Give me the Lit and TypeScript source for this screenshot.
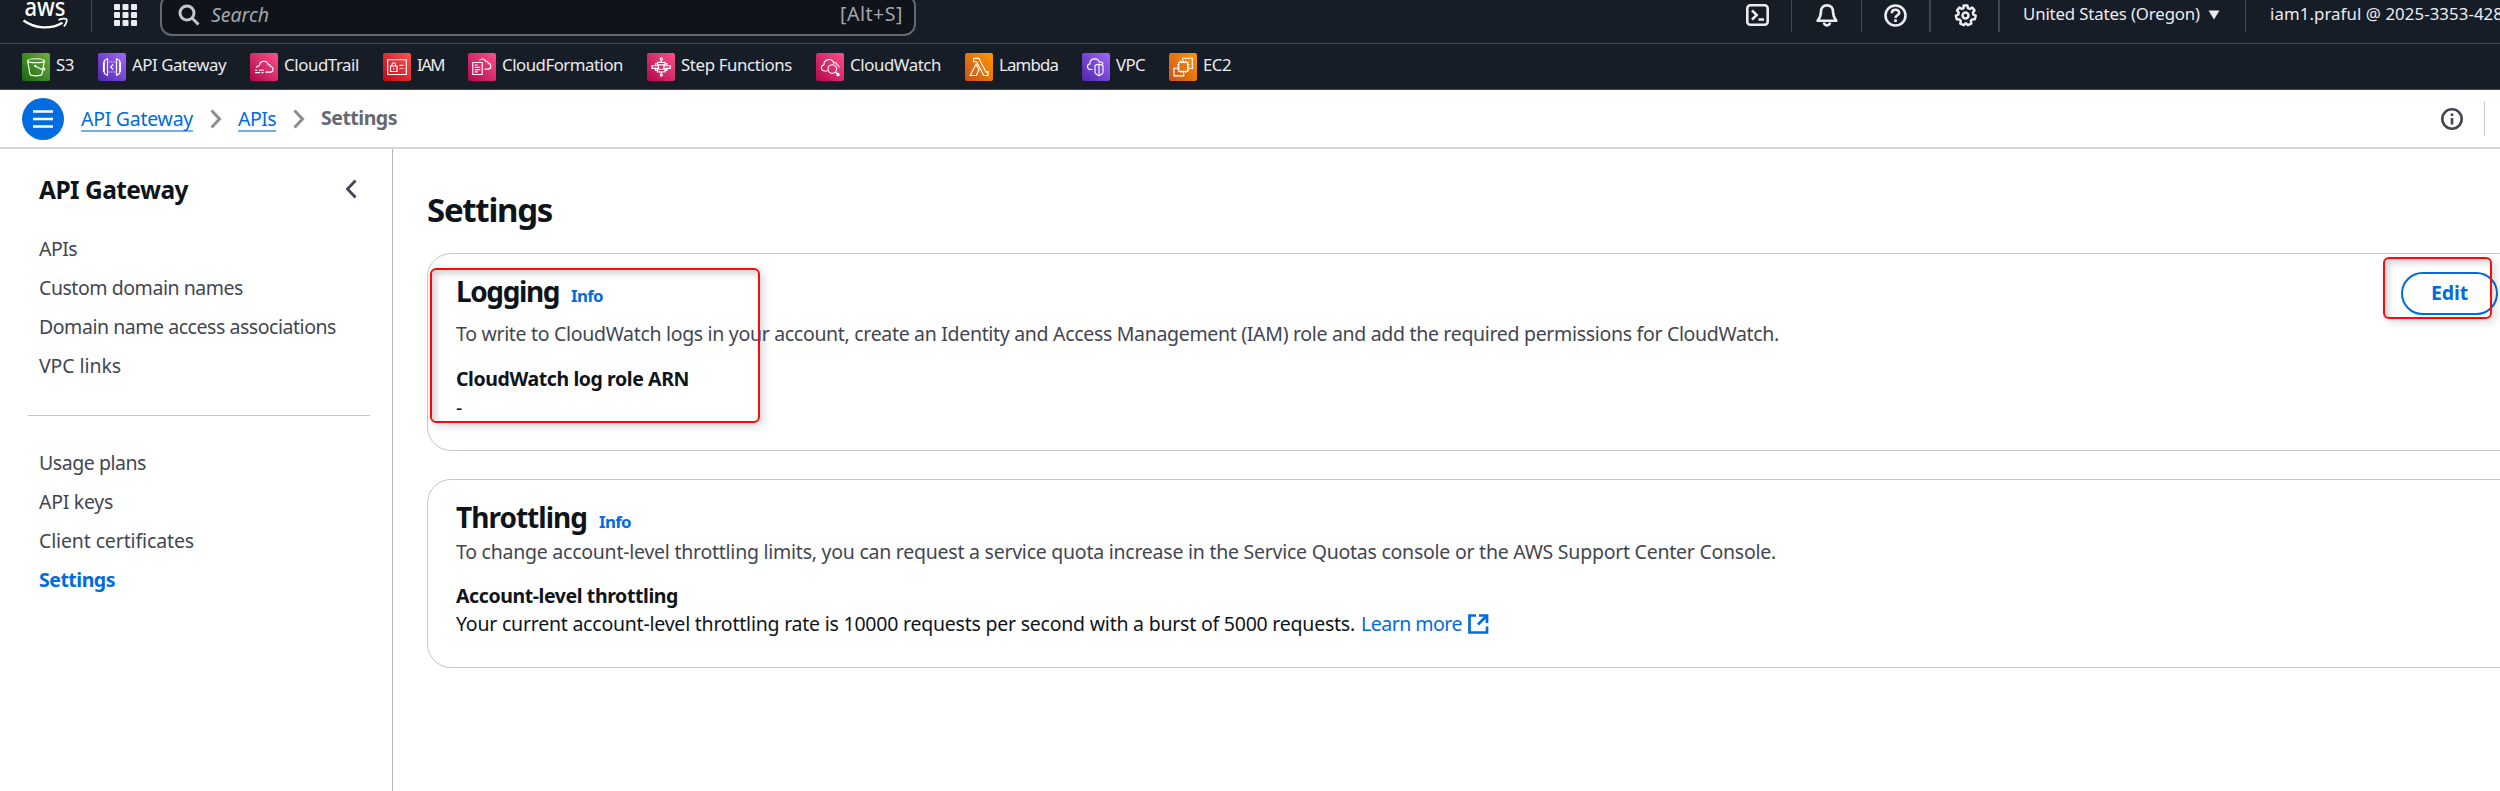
import { LitElement, html, svg, css } from "lit";
import { customElement, property } from "lit/decorators.js";

/** A single line of text whose tracking is tightened to a given measure. */
@customElement("ui-text")
class UiText extends LitElement {
  @property({ type: Number }) measure = 0;
  @property() text = "";

  static styles = css`
    :host { display: inline-block; white-space: pre; flex: none; }
  `;

  updated() {
    const span = this.renderRoot.querySelector("span")!;
    span.style.letterSpacing = "0px";
    const natural = span.getBoundingClientRect().width;
    span.style.letterSpacing = `${(this.measure - natural) / this.text.length}px`;
    this.style.width = `${this.measure}px`;
  }

  render() {
    return html`<span>${this.text}</span>`;
  }
}

const t = (text: string, measure: number, cls = "") =>
  html`<ui-text class=${cls} .text=${text} .measure=${measure}></ui-text>`;

const glyphs = {
  s3: svg`<ellipse cx="14" cy="7.7" rx="8.4" ry="2"/><path d="M5.6 7.7 8 21.3c.8 2 11.2 2 12 0l2.4-13.6M13.5 13.2l6.8 3.4c3.4 1.2 3-.9 1-2.4"/><circle cx="13.3" cy="13" r=".6"/>`,
  gateway: svg`<path d="M9.5 5.8 6.3 7.5v13l3.2 1.7zM18.5 5.8l3.2 1.7v13l-3.2 1.7zM6.3 9.5h-.8v9h.8M21.7 9.5h.8v9h-.8M15.2 11.3 12.6 14l2.6 2.7"/><path stroke-dasharray="1 1.2" d="M11 9h7M11 19h7"/>`,
  trail: svg`<path d="M9.5 12.4c.3-5 7.6-5.6 8.4-.9 1.3-.6 2.200.2 2.300 1.700 4 .7 3.500 5.900 0 5.900h-5M5 17.200h2.500M9 17.200h5M5 19.600h5M11.500 19.600h2M6.300 14.800c.5-1.500 1.500-2 3-2.200"/>`,
  iam: svg`<path d="M4.700 6.700h18.600v14.800H4.700zM7.500 13h6.500v5.500H7.500zM9 13v-1.500c0-2.300 3.500-2.300 3.500 0V13M10.700 15v1.500M16.500 12.300h4M16.500 15.500h2M19.500 15.500h1"/>`,
  formation: svg`<path d="M4.800 9.500h9.400v12H4.800zM6.800 12h3M6.800 14.300h5.400M6.800 16.600h5.400M6.800 18.900h3M11.500 7.500c1.500-2.300 5.500-2 6.300 1 1.300-.6 2.200.2 2.300 1.600 4 .8 3.600 6-.4 6h-3.200"/>`,
  steps: svg`<circle cx="14.300" cy="6" r="1.100"/><circle cx="14.300" cy="22" r="1.100"/><path d="M14.300 7.200v2M14.300 18.800v2M10.500 9.300h7.500v2.600h-7.500zM5 12.700h6.500v2.700H5zM16.800 12.700h6.500v2.700h-6.500zM10.500 16.200h7.500v2.600h-7.500zM8.500 12.700v-2h2M18 10.700h2v2M8.500 15.400v2h2M18 17.400h2v-2"/>`,
  watch: svg`<path d="M11.500 18H9c-4.600 0-4.600-5.700-1-6.300-.2-6 8.200-7 9.700-1.700 2-.9 3.200.3 3.300 1.700 1.500.5 2.200 1.500 2.200 2.800"/><circle cx="16.300" cy="16" r="4.300"/><path d="m19.500 19 3.500 3"/><circle cx="22" cy="21.600" r="1.200"/>`,
  lambda: svg`<path d="M5.200 22.500 11 11.300l3 5.600-2.800 5.600zM8.700 5.300h5.100l7.300 13.900 1.900-.6 0 3.900h-4.300L11.600 8.700H8.700z"/>`,
  vpc: svg`<path d="M10.500 16.500H8.800c-4.300 0-4.200-5 -.9-5.600-.2-6 8-6.800 9.600-1.600 2-.8 3.300.1 3.500 1.800M13 12.500c2-1.600 6.200-1.600 8 0v6c0 2-2 3.500-4 4.200-2-.7-4-2.200-4-4.200zM17 11.500v11"/>`,
  ec2: svg`<path d="M9.800 9.300h9v9h-9zM12 9.300V7.500M14.300 9.300V7.500M16.600 9.300V7.500M12 20v-1.700M14.300 20v-1.700M16.600 20v-1.700M8 11.500h1.800M8 13.800h1.800M8 16.100h1.800M18.800 11.500h1.700M18.800 13.800h1.700M18.800 16.100h1.700M13.500 5.200h9.800v10.300h-2.500M8 15.200H5v7.600h9.800v-2.600M13.500 5.200v2"/>`,
};

type Glyph = keyof typeof glyphs;
const services: { name: string; width: number; icon: Glyph; tint: string }[] = [
  { name: "S3", width: 18, icon: "s3", tint: "green" },
  { name: "API Gateway", width: 94, icon: "gateway", tint: "violet" },
  { name: "CloudTrail", width: 75, icon: "trail", tint: "pink" },
  { name: "IAM", width: 27, icon: "iam", tint: "red" },
  { name: "CloudFormation", width: 121, icon: "formation", tint: "pink" },
  { name: "Step Functions", width: 111, icon: "steps", tint: "pink" },
  { name: "CloudWatch", width: 91, icon: "watch", tint: "pink" },
  { name: "Lambda", width: 59, icon: "lambda", tint: "orange" },
  { name: "VPC", width: 29, icon: "vpc", tint: "violet" },
  { name: "EC2", width: 28, icon: "ec2", tint: "orange" },
];

const separator = html`<svg class="crumb-sep" width="12" height="20" viewBox="0 0 12 20"><path d="m1.500 1.500 8 8.500-8 8.500" fill="none" stroke="#8c8c94" stroke-width="3"/></svg>`;

@customElement("app-root")
class AppRoot extends LitElement {
  static styles = css`
    :host {
      display: flex; flex-direction: column; position: relative;
      width: 100%; height: 791px; overflow: hidden; background: #fff;
      font: 19.5px/30px "Noto Sans", sans-serif; color: #0f141a;
    }
    svg { display: block; flex: none; }
    .top {
      flex: none; display: flex; align-items: center; box-sizing: border-box;
      height: 57px; margin-top: -13px; border-bottom: 1px solid #424650;
      background: #161d26; color: #ebebf0;
    }
    .logo { margin-left: 22px; font-size: 25px; }
    .rule { flex: none; width: 1px; height: 34px; background: #424650; }
    .rule.thick { width: 2px; }
    .after-logo { margin-left: 23px; }
    .after-shell { margin: 0 24px 0 22px; }
    .after-bell { margin: 0 22px 0 23px; }
    .after-help { margin: 0 23px 0 22px; }
    .after-gear { margin: 0 23px 0 21px; }
    .after-region { margin: 0 24px 0 25px; }
    .caret { margin-left: 8px; }
    .apps { margin: 0 23px 0 22px; }
    .search {
      flex: none; display: flex; align-items: center; box-sizing: border-box; width: 756px; height: 42px;
      padding: 0 11px 0 16px; border: 2px solid #656871; border-radius: 12px;
      background: #0f141a; color: #a4a4ad;
    }
    .search .hint { margin-left: 11px; font-style: italic; }
    .search .key { margin-left: auto; padding-bottom: 2px; }
    .tools { flex: none; display: flex; align-items: center; margin-left: 830px; }
    .small { font-size: 16.8px; line-height: 24px; padding-bottom: 3px; }
    .services {
      flex: none; display: flex; align-items: center; gap: 24px; box-sizing: border-box;
      height: 46px; padding-left: 22px; border-bottom: 1px solid #424650;
      background: #161d26; color: #ebebf0;
    }
    .service { display: flex; align-items: center; gap: 6px; }
    .tile { border-radius: 2px; fill: none; stroke: #fff; stroke-width: 1.15; }
    .green { background: linear-gradient(45deg, #1b660f, #6cae3e); }
    .violet { background: linear-gradient(45deg, #4d27a8, #a166ff); }
    .pink { background: linear-gradient(45deg, #b0084d, #ff4f8b); }
    .red { background: linear-gradient(45deg, #bd0816, #ff5252); }
    .orange { background: linear-gradient(45deg, #c8511b, #ff9900); }
    .crumbs {
      flex: none; display: flex; align-items: center; box-sizing: border-box;
      height: 59px; padding-left: 22px; border-bottom: 2px solid #d5d5dc;
    }
    .menu {
      display: grid; place-items: center; width: 42px; height: 42px;
      margin-right: 17px; border-radius: 50%; background: #006ce0;
    }
    .crumb { color: #006ce0; line-height: 25px; height: 24px; border-bottom: 2px solid #73b0f0; }
    .crumb-sep { margin: 0 16px 0 17px; }
    .here { color: #656871; font-weight: 700; padding-bottom: 2px; }
    .info-icon { margin-left: auto; }
    .crumbs .rule { margin: 0 15px 0 21px; background: #c6c6cd; }
    .body { flex: 1; display: flex; min-height: 0; }
    .side { flex: none; box-sizing: border-box; width: 393px; padding-top: 23px; border-right: 1px solid #b4b4bb; color: #424650; }
    .side-head { display: flex; align-items: center; justify-content: space-between; height: 36px; margin-bottom: 21px; padding: 0 35px 0 39px; }
    .side-title { font-size: 24.5px; line-height: 36px; font-weight: 700; color: #0f141a; }
    .collapse { margin-bottom: 2px; }
    .links { display: flex; flex-direction: column; padding-left: 39px; line-height: 39px; }
    .side hr { height: 1px; margin: 30px 22px 27px 28px; border: 0; background: #c6c6cd; }
    .active { color: #006ce0; font-weight: 700; }
    .main { flex: 1; min-width: 0; padding: 38px 0 0 34px; }
    .h1 { display: block; font-size: 33px; line-height: 45px; font-weight: 700; margin: 0 0 21px; }
    .card { box-sizing: border-box; margin-right: -27px; padding: 18px 28px; border: 1px solid #c6c6cd; border-radius: 24px; }
    .logging { height: 198px; margin-bottom: 28px; }
    .throttling { height: 189px; }
    .head { display: flex; align-items: baseline; height: 39px; }
    .h2 { font-size: 28px; line-height: 38px; font-weight: 700; margin: 0 12px 0 0; }
    .info { font-size: 16.8px; font-weight: 700; color: #006ce0; }
    .edit {
      display: grid; place-items: center; align-self: flex-start; box-sizing: border-box;
      width: 97px; height: 43px; margin-left: auto; padding-bottom: 2px;
      border: 2px solid #006ce0; border-radius: 22px; color: #006ce0; font-weight: 700;
    }
    .desc { display: block; color: #424650; }
    .logging .desc { margin-top: 8px; }
    .key-label { display: block; margin-top: 15px; font-weight: 700; }
    .throttling .key-label { margin-top: 14px; }
    .value { display: flex; align-items: center; line-height: 28px; }
    .throttling .value { margin-top: -1px; }
    .learn { margin-left: 6px; color: #006ce0; }
    .external { margin-left: 6px; }
    .mark {
      position: absolute; box-sizing: border-box; border: 2px solid #fb0a0a; border-radius: 6px;
      box-shadow: 3px 3px 8px rgba(0, 0, 0, 0.16), inset 4px 4px 6px rgba(0, 0, 0, 0.17);
    }
    .mark-logging { left: 430px; top: 268px; width: 330px; height: 155px; }
    .mark-edit { left: 2383px; top: 257px; width: 109px; height: 62px; }
  `;

  private header() {
    return html`
      <div class="top">
        <svg class="logo" width="46" height="30" viewBox="0 0 46 30">
          <text x="2.500" y="16" fill="#fff" font-weight="500" textLength="41" lengthAdjust="spacingAndGlyphs">aws</text>
          <path d="M1.500 20.500c12 8.600 27.500 9 39 2.200" fill="none" stroke="#fff" stroke-width="2.400"/>
          <path d="M36.500 20c3-1.600 7-1.700 8-.8.700 1.200-.4 5-2.600 7.300" fill="none" stroke="#fff" stroke-width="1.800"/>
        </svg>
        <div class="rule after-logo"></div>
        <svg class="apps" width="23" height="22" viewBox="0 0 23 22" fill="#ebebf0">
          ${[0, 8, 16].map((y) => [0, 8.5, 17].map((x) => svg`<rect x=${x} y=${y} width="6" height="6" rx="1"/>`))}
        </svg>
        <div class="search">
          <svg width="22" height="22" viewBox="0 0 22 22" fill="none" stroke="#c6c6cd" stroke-width="3"><circle cx="9" cy="9" r="7"/><path d="m14 14 6.500 6.500"/></svg>
          ${t("Search", 58, "hint")}${t("[Alt+S]", 63, "key")}
        </div>
        <div class="tools">
          <svg width="23" height="22" viewBox="0 0 23 22" fill="none" stroke="#ebebf0" stroke-width="2.600"><rect x="1.300" y="1.300" width="20.400" height="19.400" rx="3"/><path d="m6 6.300 4.700 4.700L6 15.700M12.500 15.500h5.500"/></svg>
          <div class="rule after-shell"></div>
          <svg width="22" height="23" viewBox="0 0 22 23" fill="none" stroke="#ebebf0" stroke-width="2.600" stroke-linejoin="round"><path d="M11 1.400c-4 0-6 2.800-6 6.200 0 4-1 6.300-3.400 9.200h18.800C18 13.900 17 11.600 17 7.600c0-3.400-2-6.200-6-6.200zM8 18.500c.3 3.800 5.700 3.800 6 0"/></svg>
          <div class="rule after-bell"></div>
          <svg width="23" height="23" viewBox="0 0 23 23" fill="none" stroke="#ebebf0" stroke-width="2.600"><circle cx="11.500" cy="11.500" r="10"/><path d="M7.800 9.200c0-4.700 7.400-4.500 7.400-.4 0 2.600-3.700 2.400-3.700 5.200M11.500 15.300v2.700"/></svg>
          <div class="rule thick after-help"></div>
          <svg width="23" height="23" viewBox="0 0 23 23" fill="none" stroke="#ebebf0" stroke-width="2.500" stroke-linejoin="round"><path d="M9.600 1.500h3.800l.6 2.600 1.900.8 2.300-1.400 2.300 2.900-1.600 2.200.5 2 2.300 1-.9 3.700-2.700.1-1.300 1.600.5 2.600-3.400 1.600-1.800-1.900h-.6l-1.800 1.900-3.400-1.600.5-2.600-1.300-1.600-2.700-.1-.9-3.700 2.300-1 .5-2-1.600-2.200 2.300-2.900 2.300 1.400 1.900-.8z"/><circle cx="11.500" cy="11.500" r="3"/></svg>
          <div class="rule thick after-gear"></div>
          ${t("United States (Oregon)", 177, "small")}
          <svg class="caret" width="12" height="10" viewBox="0 0 12 10" fill="#ebebf0"><path d="M.5.500h11L6 9.500z"/></svg>
          <div class="rule after-region"></div>
          ${t("iam1.praful @ 2025-3353-428", 233, "small")}
        </div>
      </div>
      <div class="services">
        ${services.map(
          (s) => html`<div class="service">
            <svg class="tile ${s.tint}" width="28" height="28" viewBox="0 0 28 28">${glyphs[s.icon]}</svg>
            ${t(s.name, s.width, "small")}
          </div>`
        )}
      </div>`;
  }

  render() {
    return html`
      ${this.header()}
      <div class="crumbs">
        <div class="menu"><svg width="20" height="18" viewBox="0 0 20 18" stroke="#fff" stroke-width="2.600"><path d="M0 1.500h20M0 9h20M0 16.500h20"/></svg></div>
        ${t("API Gateway", 112, "crumb")}${separator}${t("APIs", 38, "crumb")}${separator}${t("Settings", 76, "here")}
        <svg class="info-icon" width="22" height="22" viewBox="0 0 22 22" fill="none" stroke="#424650" stroke-width="2.600"><circle cx="11" cy="11" r="9.700"/><path d="M11 10v6.500M11 5.500v2.600"/></svg>
        <div class="rule"></div>
      </div>
      <div class="body">
        <div class="side">
          <div class="side-head">
            ${t("API Gateway", 149, "side-title")}
            <svg class="collapse" width="12" height="20" viewBox="0 0 12 20"><path d="m10.500 1.500-8 8.500 8 8.500" fill="none" stroke="#424650" stroke-width="2.800"/></svg>
          </div>
          <div class="links">
            ${t("APIs", 38)}${t("Custom domain names", 204)}${t("Domain name access associations", 297)}${t("VPC links", 82)}
          </div>
          <hr />
          <div class="links">
            ${t("Usage plans", 107)}${t("API keys", 74)}${t("Client certificates", 155)}${t("Settings", 76, "active")}
          </div>
        </div>
        <div class="main">
          ${t("Settings", 125, "h1")}
          <div class="card logging">
            <div class="head">
              ${t("Logging", 103, "h2")}${t("Info", 32, "info")}
              <div class="edit">${t("Edit", 37)}</div>
            </div>
            ${t("To write to CloudWatch logs in your account, create an Identity and Access Management (IAM) role and add the required permissions for CloudWatch.", 1323, "desc")}
            ${t("CloudWatch log role ARN", 233, "key-label")}
            <div class="value">${t("-", 7)}</div>
          </div>
          <div class="card throttling">
            <div class="head">${t("Throttling", 131, "h2")}${t("Info", 32, "info")}</div>
            ${t("To change account-level throttling limits, you can request a service quota increase in the Service Quotas console or the AWS Support Center Console.", 1320, "desc")}
            ${t("Account-level throttling", 222, "key-label")}
            <div class="value">
              ${t("Your current account-level throttling rate is 10000 requests per second with a burst of 5000 requests.", 899)}
              ${t("Learn more", 101, "learn")}
              <svg class="external" width="21" height="20" viewBox="0 0 21 20" fill="none" stroke="#006ce0" stroke-width="2.700"><path d="M8 1.500H1.500v17h17.500V12.500M11 1.500h8v7.500M19 1.500l-9 9"/></svg>
            </div>
          </div>
        </div>
      </div>
      <div class="mark mark-logging"></div>
      <div class="mark mark-edit"></div>
    `;
  }
}
